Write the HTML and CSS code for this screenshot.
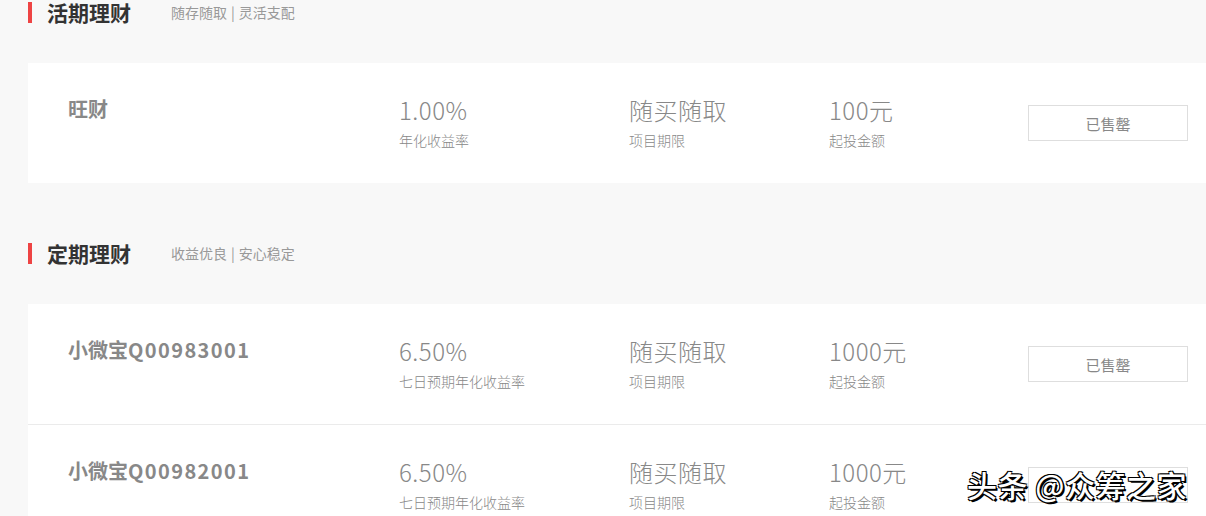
FILE: index.html
```html
<!DOCTYPE html>
<html lang="zh-CN">
<head>
<meta charset="utf-8">
<link rel="stylesheet" href="styles.css">
</head>
<body>
<div class="page">
  <section class="sec">
    <div class="sec-head">
      <span class="bar"></span>
      <h2 class="title">活期理财</h2>
      <span class="sub">随存随取<span class="sep">|</span>灵活支配</span>
    </div>
    <div class="card">
      <div class="row">
        <div class="name">旺财</div>
        <div class="cell"><div class="val">1.00%</div><div class="lbl">年化收益率</div></div>
        <div class="cell"><div class="val">随买随取</div><div class="lbl">项目期限</div></div>
        <div class="cell"><div class="val">100元</div><div class="lbl">起投金额</div></div>
        <div class="btn">已售罄</div>
      </div>
    </div>
  </section>
  <section class="sec sec2">
    <div class="sec-head">
      <span class="bar"></span>
      <h2 class="title">定期理财</h2>
      <span class="sub">收益优良<span class="sep">|</span>安心稳定</span>
    </div>
    <div class="card">
      <div class="row">
        <div class="name">小微宝<span class="code">Q00983001</span></div>
        <div class="cell"><div class="val">6.50%</div><div class="lbl">七日预期年化收益率</div></div>
        <div class="cell"><div class="val">随买随取</div><div class="lbl">项目期限</div></div>
        <div class="cell"><div class="val">1000元</div><div class="lbl">起投金额</div></div>
        <div class="btn">已售罄</div>
      </div>
      <div class="row">
        <div class="name">小微宝<span class="code">Q00982001</span></div>
        <div class="cell"><div class="val">6.50%</div><div class="lbl">七日预期年化收益率</div></div>
        <div class="cell"><div class="val">随买随取</div><div class="lbl">项目期限</div></div>
        <div class="cell"><div class="val">1000元</div><div class="lbl">起投金额</div></div>
        <div class="btn btn-hidden"></div>
      </div>
    </div>
  </section>
</div>
<div class="watermark">头条 @众筹之家</div>
</body>
</html>
```
FILE: styles.css
```css
html, body {
  margin: 0;
  padding: 0;
  background: #f8f8f8;
  font-family: "Noto Sans CJK SC", "Noto Sans", sans-serif;
  overflow: hidden;
}
.page {
  margin-top: -11px;
  padding-left: 28px;
}
.sec2 {
  margin-top: 47px;
}
.sec-head {
  height: 50px;
  box-sizing: border-box;
  padding-bottom: 4px;
  display: flex;
  align-items: center;
}
.bar {
  width: 4px;
  height: 21px;
  background: #ee4444;
  margin-right: 15px;
}
.title {
  margin: 0;
  font-size: 21px;
  font-weight: 700;
  color: #333;
  width: 124px;
  line-height: 1;
}
.sub {
  font-size: 14px;
  color: #999;
}
.sep {
  margin: 0 4px;
}
.card {
  margin-top: 24px;
  background: #fff;
  width: 1220px;
}
.row {
  height: 120px;
  display: grid;
  grid-template-columns: 331px 230px 200px 199px 160px;
  padding-left: 40px;
  box-sizing: border-box;
  align-items: start;
}
.row + .row {
  border-top: 1px solid #ebebeb;
}
.name {
  padding-top: 31px;
  font-size: 20px;
  font-weight: 700;
  color: #888;
  line-height: 30px;
}
.code {
  letter-spacing: 1.4px;
}
.cell {
  padding-top: 30px;
}
.val {
  font-size: 24px;
  font-weight: 300;
  color: #888;
  line-height: 34px;
  letter-spacing: 0.5px;
}
.lbl {
  font-size: 14px;
  color: #888;
  line-height: 20px;
  margin-top: 3px;
  font-weight: 300;
}
.btn {
  margin-top: 42px;
  height: 36px;
  box-sizing: border-box;
  border: 1px solid #dedede;
  display: flex;
  align-items: center;
  justify-content: center;
  font-size: 15px;
  color: #888;
}
.watermark {
  position: absolute;
  left: 967px;
  top: 463px;
  font-size: 30px;
  line-height: 42px;
  letter-spacing: 0.5px;
  color: #fff;
  font-weight: 500;
  text-shadow: -1px -1px 0 #000, 1px -1px 0 #000, -1px 1px 0 #000, 1px 1px 0 #000, 2px 2px 0 #000;
}
```
